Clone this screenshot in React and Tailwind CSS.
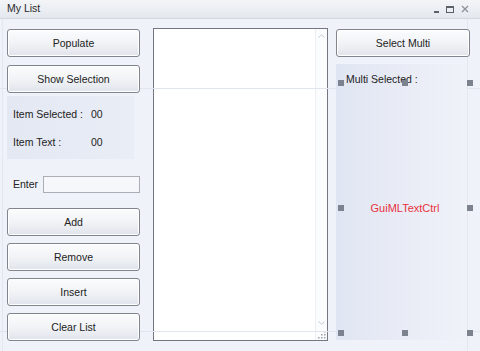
import React from "react";

const font = { fontFamily: '"Liberation Sans", Arial, sans-serif' };

function Btn({ children, className = "" }) {
  return (
    <div
      className={
        "relative flex h-[28px] shrink-0 items-center justify-center overflow-hidden rounded-[3px] border border-[#80858e] bg-gradient-to-b from-[#fbfcfd] via-[#f1f3f6] to-[#e0e4eb] pt-[1px] text-[10.5px] text-[#222] shadow-[inset_0_0_0_1px_#ffffff] " +
        className
      }
    >
      <span className="relative">{children}</span>
    </div>
  );
}

function Handle({ className }) {
  return <div className={"absolute h-[6px] w-[6px] bg-[#7d828f] " + className} />;
}

export default function App() {
  return (
    <div
      className="relative flex h-[351px] w-[480px] flex-col overflow-hidden bg-[#eff2f8]"
      style={font}
    >
      {/* title bar */}
      <div className="flex h-[19px] shrink-0 items-center justify-between border-b border-[#d3d8e0] bg-gradient-to-b from-[#f3f5f8] to-[#e4e8ee] pl-[7px] pr-[11px]">
        <span className="text-[10.5px] text-[#2a2a2a]">My List</span>
        <div className="flex items-center gap-[7px] text-[#5a5f68]">
          <div className="mt-[5px] h-[2px] w-[5px] bg-[#5a5f68]" />
          <div className="h-[7px] w-[8px] border border-t-2 border-[#5a5f68]" />
          <svg width="8" height="8" viewBox="0 0 8 8">
            <path d="M1 1L7 7M7 1L1 7" stroke="#8a8f98" strokeWidth="1.2" />
          </svg>
        </div>
      </div>

      {/* body */}
      <div className="relative flex flex-1 pt-[10px]">
        {/* guide lines */}
        <div className="pointer-events-none absolute left-0 right-0 top-[69px] h-px bg-[#e1e5ed]" />
        <div className="pointer-events-none absolute left-0 right-0 top-[312px] h-px bg-[#e1e5ed]" />
        <div className="pointer-events-none absolute bottom-0 top-0 left-[2px] w-px bg-[#e3e7ee]" />
        <div className="pointer-events-none absolute bottom-0 top-0 left-[467px] w-px bg-[#e3e7ee]" />

        {/* left column */}
        <div className="ml-[7px] flex w-[133px] shrink-0 flex-col">
          <Btn>Populate</Btn>
          <Btn className="mt-[8px]">Show Selection</Btn>
          <div className="mt-[3px] flex h-[63px] w-[127px] flex-col justify-center gap-[12px] bg-gradient-to-r from-[#e4e8f3] to-[#e9edf6] pl-[6px] pt-[2px] text-[10.5px] text-[#222]">
            <div className="flex">
              <span className="w-[78px]">Item Selected :</span>
              <span>00</span>
            </div>
            <div className="flex">
              <span className="w-[78px]">Item Text :</span>
              <span>00</span>
            </div>
          </div>
          <div className="mt-[17px] flex items-center">
            <span className="ml-[6px] w-[30px] text-[10.5px] text-[#222]">Enter</span>
            <div className="h-[17px] flex-1 border border-[#a9aeb7] bg-[#f5f7fa]" />
          </div>
          <div className="mt-[15px] flex flex-col gap-[7px]">
            <Btn>Add</Btn>
            <Btn>Remove</Btn>
            <Btn>Insert</Btn>
            <Btn>Clear List</Btn>
          </div>
        </div>

        {/* list box */}
        <div className="ml-[13px] mt-[-1px] flex h-[313px] w-[175px] shrink-0 border border-[#737781] bg-white">
          <div className="flex-1" />
          <div className="flex w-[12px] flex-col items-center justify-between border-l border-[#eceff4] bg-[#fbfcfd] pb-[1px] pt-[5px]">
            <svg width="7" height="4" viewBox="0 0 7 4">
              <path d="M0.5 3.5L3.5 0.8L6.5 3.5" stroke="#c3c8d1" fill="none" />
            </svg>
            <div className="flex flex-col items-center gap-[6px]">
              <svg width="7" height="4" viewBox="0 0 7 4">
                <path d="M0.5 0.5L3.5 3.2L6.5 0.5" stroke="#c3c8d1" fill="none" />
              </svg>
              <svg width="8" height="8" viewBox="0 0 8 8" className="self-end">
                <rect x="6" y="0" width="1.5" height="1.5" fill="#9aa0aa" />
                <rect x="3" y="3" width="1.5" height="1.5" fill="#9aa0aa" />
                <rect x="6" y="3" width="1.5" height="1.5" fill="#9aa0aa" />
                <rect x="0" y="6" width="1.5" height="1.5" fill="#9aa0aa" />
                <rect x="3" y="6" width="1.5" height="1.5" fill="#9aa0aa" />
                <rect x="6" y="6" width="1.5" height="1.5" fill="#9aa0aa" />
              </svg>
            </div>
          </div>
        </div>

        {/* right column */}
        <div className="relative ml-[8px] flex w-[134px] shrink-0 flex-col">
          <Btn>Select Multi</Btn>
          <div className="relative mt-[7px] h-[276px] w-[131px] bg-gradient-to-r from-[#e0e5f3] via-[#e9ecf6] to-[#eff2f8]">
            <div className="absolute bottom-0 top-0 left-[9px] w-px bg-[#e6e9f2]" />
            <div className="absolute left-0 right-0 top-[8px] pl-[10px] text-[10.5px] text-[#222]">
              Multi Selected :
            </div>
            <div className="flex h-full items-center justify-center pl-[7px] pt-[13px]">
              <span className="text-[11px] text-[#e8323c]">GuiMLTextCtrl</span>
            </div>
            <Handle className="left-[2px] top-[16px]" />
            <Handle className="left-[66px] top-[16px]" />
            <Handle className="left-[131px] top-[16px]" />
            <Handle className="left-[2px] top-[141px]" />
            <Handle className="left-[131px] top-[141px]" />
            <Handle className="left-[2px] top-[266px]" />
            <Handle className="left-[66px] top-[266px]" />
            <Handle className="left-[131px] top-[266px]" />
          </div>
        </div>
      </div>
    </div>
  );
}
